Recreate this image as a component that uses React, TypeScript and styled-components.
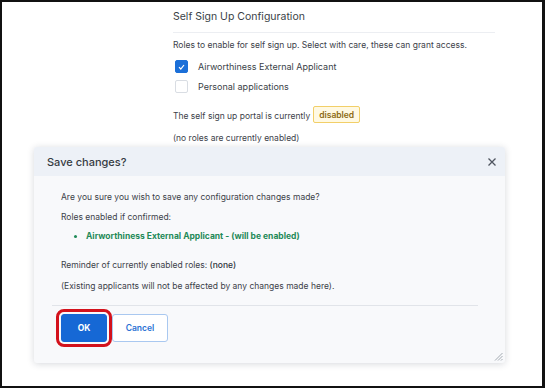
import React from 'react';
import styled, { createGlobalStyle } from 'styled-components';

const GlobalStyle = createGlobalStyle`
  html, body {
    margin: 0;
    padding: 0;
    background: #fff;
  }
  body {
    font-family: 'Inter', 'Noto Sans', sans-serif;
    color: #3c4149;
  }
  * {
    box-sizing: border-box;
  }
`;

const Frame = styled.div`
  position: relative;
  width: 545px;
  height: 388px;
  border: 2px solid #111;
  border-right-width: 3px;
  background: #fff;
  overflow: hidden;
`;

const Page = styled.main`
  width: 322px;
  margin-left: 171px;
  padding-top: 8px;
  display: flex;
  flex-direction: column;
`;

const PageTitle = styled.h2`
  margin: 0;
  font-size: 10.5px;
  line-height: 14px;
  font-weight: 400;
  color: #3a3f47;
  padding-bottom: 8px;
  border-bottom: 1px solid #eceef2;
`;

type TextProps = {
  top: number;
};

const Text = styled.p<TextProps>`
  margin: ${({ top }) => top}px 0 0;
  font-size: 8.5px;
  line-height: 12px;
  color: #3c4149;
`;

const RoleList = styled.div`
  display: flex;
  flex-direction: column;
  margin-top: 6px;
  padding-left: 2px;
`;

const RoleRow = styled.label`
  display: flex;
  align-items: center;
  gap: 10px;
  height: 19.5px;
  font-size: 9px;
  color: #3a3f47;
`;

const Box = styled.span<{ checked: boolean }>`
  width: 13px;
  height: 13px;
  border-radius: 2px;
  display: flex;
  align-items: center;
  justify-content: center;
  background: ${({ checked }) => (checked ? '#1b6fd8' : '#fff')};
  border: 1px solid ${({ checked }) => (checked ? '#1b6fd8' : '#d9dde3')};
`;

const StatusRow = styled.div`
  display: flex;
  align-items: center;
  gap: 3px;
  margin-top: 12px;
  font-size: 8.5px;
  color: #3c4149;
`;

const Badge = styled.span`
  display: inline-flex;
  align-items: center;
  height: 17px;
  padding: 0 5px;
  border: 1px solid #f2cf68;
  border-radius: 2px;
  background: #fff9e3;
  color: #8c6a12;
  font-weight: 600;
  font-size: 8.5px;
  margin-top: -2px;
`;

const Modal = styled.section`
  position: absolute;
  left: 32px;
  top: 145px;
  width: 471px;
  height: 216px;
  display: flex;
  flex-direction: column;
  background: #f8f9fb;
  border-radius: 3px;
  box-shadow: 0 1px 7px rgba(30, 40, 60, 0.18);
  overflow: hidden;
`;

const ModalHeader = styled.header`
  height: 29px;
  flex: none;
  display: flex;
  align-items: center;
  justify-content: space-between;
  padding: 0 8px 0 13px;
  background: #edf1f7;
`;

const ModalTitle = styled.h3`
  margin: 0;
  font-size: 11px;
  font-weight: 500;
  color: #363b43;
`;

const CloseButton = styled.button`
  border: 0;
  background: none;
  padding: 0;
  width: 10px;
  height: 10px;
  display: flex;
  align-items: center;
  justify-content: center;
`;

const ModalBody = styled.div`
  flex: 1;
  padding: 15px 27px 0 18px;
  display: flex;
  flex-direction: column;
`;

const Indent = styled.div`
  padding-left: 9px;
`;

const ConfirmList = styled.ul`
  margin: 7px 0 0;
  padding-left: 25px;
  list-style: disc;
  color: #1f8a58;
  font-size: 8.5px;
  line-height: 12px;
  font-weight: 700;
`;

const Strong = styled.span`
  font-weight: 500;
  color: #2f343b;
`;

const Divider = styled.hr`
  margin: 13px 0 0;
  border: 0;
  border-top: 1px solid #e1e4e9;
`;

const Footer = styled.div`
  display: flex;
  gap: 5px;
  margin-top: 8px;
  padding-left: 9px;
`;

type ButtonProps = {
  primary?: boolean;
};

const Button = styled.button<ButtonProps>`
  height: 28px;
  padding: 0;
  width: ${({ primary }) => (primary ? '46px' : '56px')};
  border-radius: 3px;
  font-family: inherit;
  font-size: 8.5px;
  font-weight: ${({ primary }) => (primary ? 700 : 600)};
  cursor: pointer;
  background: ${({ primary }) => (primary ? '#1668d5' : '#fff')};
  color: ${({ primary }) => (primary ? '#fff' : '#2a72d4')};
  border: 1px solid ${({ primary }) => (primary ? '#1668d5' : '#a9c8f0')};
  ${({ primary }) =>
    primary &&
    `
    outline: 3px solid #d3121c;
    outline-offset: 2px;
  `}
`;

const ResizeGrip = styled.svg`
  position: absolute;
  right: 2px;
  bottom: 2px;
`;

const Check = () => (
  <svg width='7' height='6' viewBox='0 0 7 6'>
    <path d='M1 3.2 L2.8 5 L6 1' fill='none' stroke='#fff' strokeWidth='1.2' />
  </svg>
);

const App = () => {
  return (
    <Frame>
      <GlobalStyle />
      <Page>
        <PageTitle>Self Sign Up Configuration</PageTitle>
        <Text top={6}>
          Roles to enable for self sign up. Select with care, these can grant access.
        </Text>
        <RoleList>
          <RoleRow>
            <Box checked>
              <Check />
            </Box>
            Airworthiness External Applicant
          </RoleRow>
          <RoleRow>
            <Box checked={false} />
            Personal applications
          </RoleRow>
        </RoleList>
        <StatusRow>
          The self sign up portal is currently <Badge>disabled</Badge>
        </StatusRow>
        <Text top={9}>(no roles are currently enabled)</Text>
      </Page>

      <Modal>
        <ModalHeader>
          <ModalTitle>Save changes?</ModalTitle>
          <CloseButton aria-label='close'>
            <svg width='8' height='8' viewBox='0 0 8 8'>
              <path d='M0.5 0.5 L7.5 7.5 M7.5 0.5 L0.5 7.5' stroke='#4f5560' strokeWidth='1.3' />
            </svg>
          </CloseButton>
        </ModalHeader>
        <ModalBody>
          <Indent>
            <Text top={0}>Are you sure you wish to save any configuration changes made?</Text>
            <Text top={8}>Roles enabled if confirmed:</Text>
            <ConfirmList>
              <li>Airworthiness External Applicant - (will be enabled)</li>
            </ConfirmList>
            <Text top={17}>
              Reminder of currently enabled roles: <Strong>(none)</Strong>
            </Text>
            <Text top={9}>(Existing applicants will not be affected by any changes made here).</Text>
          </Indent>
          <Divider />
          <Footer>
            <Button primary>OK</Button>
            <Button>Cancel</Button>
          </Footer>
        </ModalBody>
        <ResizeGrip width='9' height='9' viewBox='0 0 9 9'>
          <path d='M8.5 1 L1 8.5 M8.5 4 L4 8.5 M8.5 7 L7 8.5' stroke='#9aa0a8' strokeWidth='0.9' />
        </ResizeGrip>
      </Modal>
    </Frame>
  );
};

export default App;
